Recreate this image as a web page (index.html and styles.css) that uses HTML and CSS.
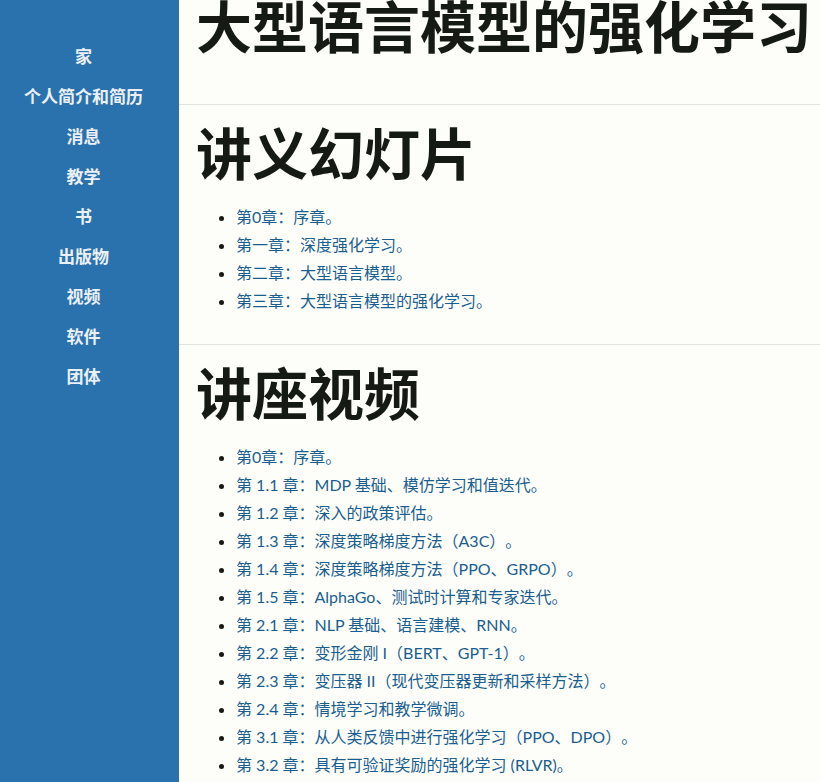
FILE: index.html
```html
<!DOCTYPE html>
<html lang="zh">
<head>
<meta charset="utf-8">
<title>大型语言模型的强化学习</title>
<link rel="stylesheet" href="styles.css">
</head>
<body>
<div class="page">
  <nav class="sidebar">
    <a class="nav-link" href="#">家</a>
    <a class="nav-link" href="#">个人简介和简历</a>
    <a class="nav-link" href="#">消息</a>
    <a class="nav-link" href="#">教学</a>
    <a class="nav-link" href="#">书</a>
    <a class="nav-link" href="#">出版物</a>
    <a class="nav-link" href="#">视频</a>
    <a class="nav-link" href="#">软件</a>
    <a class="nav-link" href="#">团体</a>
  </nav>
  <main class="content">
    <section class="block block-title">
      <h1 class="title">大型语言模型的强化学习</h1>
    </section>
    <section class="block">
      <h2 class="heading">讲义幻灯片</h2>
      <ul class="items">
        <li><a href="#">第0章：序章。</a></li>
        <li><a href="#">第一章：深度强化学习。</a></li>
        <li><a href="#">第二章：大型语言模型。</a></li>
        <li><a href="#">第三章：大型语言模型的强化学习。</a></li>
      </ul>
    </section>
    <section class="block">
      <h2 class="heading">讲座视频</h2>
      <ul class="items">
        <li><a href="#">第0章：序章。</a></li>
        <li><a href="#">第 1.1 章：MDP 基础、模仿学习和值迭代。</a></li>
        <li><a href="#">第 1.2 章：深入的政策评估。</a></li>
        <li><a href="#">第 1.3 章：深度策略梯度方法（A3C）。</a></li>
        <li><a href="#">第 1.4 章：深度策略梯度方法（PPO、GRPO）。</a></li>
        <li><a href="#">第 1.5 章：AlphaGo、测试时计算和专家迭代。</a></li>
        <li><a href="#">第 2.1 章：NLP 基础、语言建模、RNN。</a></li>
        <li><a href="#">第 2.2 章：变形金刚 I（BERT、GPT-1）。</a></li>
        <li><a href="#">第 2.3 章：变压器 II（现代变压器更新和采样方法）。</a></li>
        <li><a href="#">第 2.4 章：情境学习和教学微调。</a></li>
        <li><a href="#">第 3.1 章：从人类反馈中进行强化学习（PPO、DPO）。</a></li>
        <li><a href="#">第 3.2 章：具有可验证奖励的强化学习 (RLVR)。</a></li>
      </ul>
    </section>
  </main>
</div>
</body>
</html>
```

FILE: styles.css
```css
html, body {
  margin: 0;
  padding: 0;
  background: #fdfdf9;
}
body {
  font-family: Lato, "Noto Sans CJK SC", sans-serif;
  color: #161a14;
  text-spacing-trim: space-all;
}
.page {
  display: flex;
  min-height: 100vh;
}
.sidebar {
  width: 179px;
  flex: 0 0 179px;
  background: #2a72ad;
  display: flex;
  flex-direction: column;
  align-items: center;
  padding: 36px 12px 0 0;
  box-sizing: border-box;
}
.nav-link {
  display: block;
  color: #eaf0f6;
  text-decoration: none;
  font-family: "Noto Sans CJK SC", sans-serif;
  font-weight: 700;
  font-size: 17px;
  line-height: 40px;
  text-align: center;
}
.content {
  flex: 1;
  padding: 0 0 0 17px;
  min-width: 0;
  overflow: hidden;
}
.block {
  display: flow-root;
  border-top: 1px solid #e3e3e0;
  margin-left: -17px;
  padding-left: 17px;
  padding-bottom: 29px;
}
.block-title {
  border-top: none;
  padding-bottom: 0;
  height: 104px;
  box-sizing: border-box;
}
.title, .heading {
  font-family: "Noto Sans CJK SC", sans-serif;
  font-weight: 700;
  font-size: 56px;
  line-height: 1.2;
  margin: 0;
  color: #161a14;
  white-space: nowrap;
}
.title {
  margin-top: -10px;
}
.heading {
  margin-top: 12px;
}
.items {
  margin: 19px 0 0 0;
  padding-left: 40px;
  font-size: 16px;
  line-height: 28px;
  color: #161a14;
}
.items a {
  color: #1a5e90;
  text-decoration: none;
}
```
